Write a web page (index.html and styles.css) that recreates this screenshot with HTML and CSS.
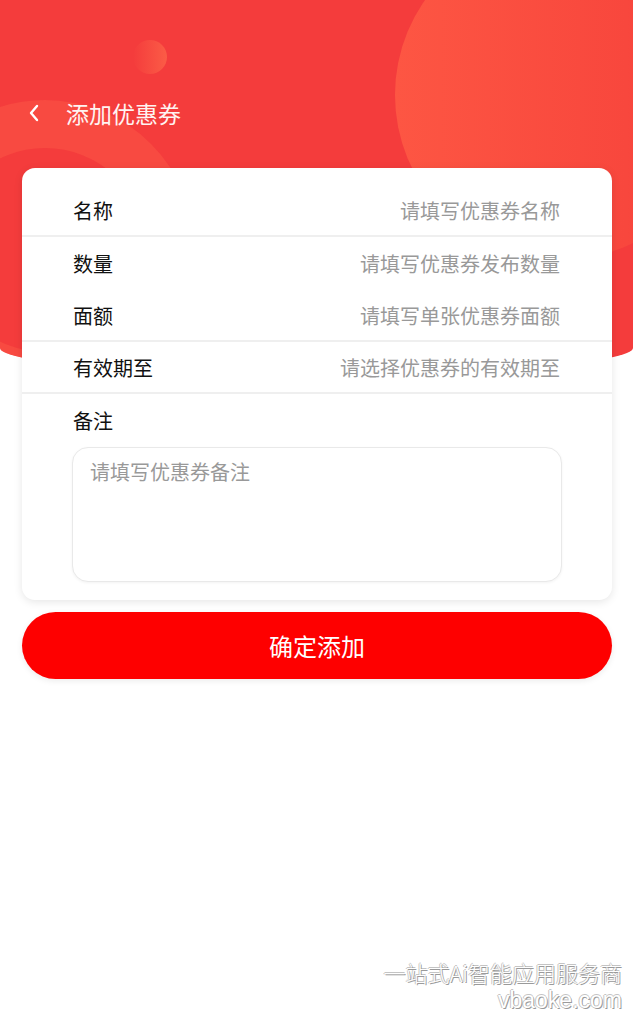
FILE: index.html
```html
<!DOCTYPE html>
<html>
<head>
    <meta charset="UTF-8">
    <title>添加优惠券</title>
    <link rel="stylesheet" href="styles.css">
</head>
<body>
    <div id="page">
        <div class="bg">
            <div class="bg-circle-big"></div>
            <div class="bg-circle-small"></div>
            <div class="bg-ring"></div>
        </div>

        <div id="header-container">
            <button class="back-button">
                <svg width="12" height="18" viewBox="0 0 12 18">
                    <path d="M9 2 L3 9 L9 16" fill="none" stroke="#fff" stroke-width="2.4" stroke-linecap="round" stroke-linejoin="round"/>
                </svg>
            </button>
            <span class="page-title">添加优惠券</span>
        </div>

        <div id="form-container">
            <div class="form-row line">
                <span class="row-label">名称</span>
                <input class="row-input" type="text" placeholder="请填写优惠券名称">
            </div>
            <div class="form-row tall">
                <span class="row-label">数量</span>
                <input class="row-input" type="text" placeholder="请填写优惠券发布数量">
            </div>
            <div class="form-row line">
                <span class="row-label">面额</span>
                <input class="row-input" type="text" placeholder="请填写单张优惠券面额">
            </div>
            <div class="form-row line">
                <span class="row-label">有效期至</span>
                <input class="row-input" type="text" placeholder="请选择优惠券的有效期至">
            </div>
            <div class="remark-block">
                <div class="row-label">备注</div>
                <textarea class="remark-input" placeholder="请填写优惠券备注"></textarea>
            </div>
        </div>

        <button class="submit-button">确定添加</button>

        <div class="watermark">
            <div class="wm-line">一站式Ai智能应用服务商</div>
            <div class="wm-line wm-url">vbaoke.com</div>
        </div>
    </div>
</body>
</html>
```

FILE: styles.css
```css
* {
    box-sizing: border-box;
}

body {
    margin: 0;
    background-color: #fff;
    font-family: "Noto Sans CJK SC", "Noto Sans", sans-serif;
}

#page {
    width: 633px;
    height: 1024px;
    position: relative;
    overflow: hidden;
    display: flex;
    flex-direction: column;
}

/* 顶部红色背景 */
.bg {
    position: absolute;
    left: 0;
    top: 0;
    width: 633px;
    height: 374px;
    background-color: #f43c3c;
    border-radius: 0 0 50% 50% / 0 0 26px 26px;
    overflow: hidden;
}

.bg-circle-big {
    position: absolute;
    left: 395px;
    top: -70px;
    width: 330px;
    height: 330px;
    border-radius: 50%;
    background: linear-gradient(90deg, #fd5643, #f8473d 70%, #f43e3c);
}

.bg-circle-small {
    position: absolute;
    left: 133px;
    top: 40px;
    width: 34px;
    height: 34px;
    border-radius: 50%;
    background: linear-gradient(90deg, rgba(250, 80, 64, 0), #fb5c46);
}

.bg-ring {
    position: absolute;
    left: -105px;
    top: 100px;
    width: 300px;
    height: 300px;
    border-radius: 50%;
    border: 48px solid rgba(252, 92, 70, 0.45);
}

#header-container {
    position: relative;
    display: flex;
    align-items: center;
    height: 40px;
    margin-top: 93px;
    padding-left: 28px;
}

.back-button {
    background-color: transparent;
    border: none;
    padding: 0;
    width: 38px;
    height: 40px;
    display: flex;
    align-items: center;
    cursor: pointer;
}

.page-title {
    color: #fff3f1;
    font-size: 23px;
    line-height: 40px;
}

#form-container {
    position: relative;
    margin: 35px 21px 0 22px;
    padding: 17px 0 18px;
    background-color: #fff;
    border-radius: 13px;
    box-shadow: 0 2px 8px rgba(0, 0, 0, 0.1);
}

.form-row {
    display: flex;
    align-items: center;
    height: 52px;
    padding: 0 52px 0 51px;
}

.form-row.tall {
    height: 53px;
}

.form-row.line {
    border-bottom: 2px solid #efefef;
}

.row-label {
    color: #111;
    font-size: 20px;
    white-space: nowrap;
}

.row-input {
    flex: 1;
    min-width: 0;
    border: none;
    outline: none;
    text-align: right;
    font-family: inherit;
    font-size: 20px;
    color: #333;
    background: transparent;
    padding: 0;
}

.row-input::placeholder,
.remark-input::placeholder {
    color: #999;
}

.remark-block {
    padding: 13px 50px 0;
}

.remark-block .row-label {
    line-height: 28px;
    padding-left: 1px;
}

.remark-input {
    display: block;
    width: 100%;
    height: 135px;
    margin-top: 12px;
    padding: 10px 17px;
    border: 1px solid #e9e9e9;
    border-radius: 16px;
    box-shadow: 0 1px 3px rgba(0, 0, 0, 0.05);
    resize: none;
    outline: none;
    font-family: inherit;
    font-size: 20px;
    line-height: 28px;
}

.submit-button {
    margin: 12px 21px 0 22px;
    height: 67px;
    border: none;
    border-radius: 34px;
    background-color: #fe0000;
    color: #fff;
    font-family: inherit;
    font-size: 24px;
    cursor: pointer;
    box-shadow: 0 2px 6px rgba(0, 0, 0, 0.08);
}

.watermark {
    position: absolute;
    right: 11px;
    bottom: 10px;
    text-align: right;
    font-size: 22px;
    font-weight: 300;
    line-height: 28px;
    color: #fff;
    text-shadow: 1px 1px 0 #9a9a9a, -1px 0 0 #c4c4c4, 0 -1px 0 #c4c4c4;
}

.wm-url {
    font-family: "Liberation Sans", sans-serif;
    font-size: 23px;
}
```
